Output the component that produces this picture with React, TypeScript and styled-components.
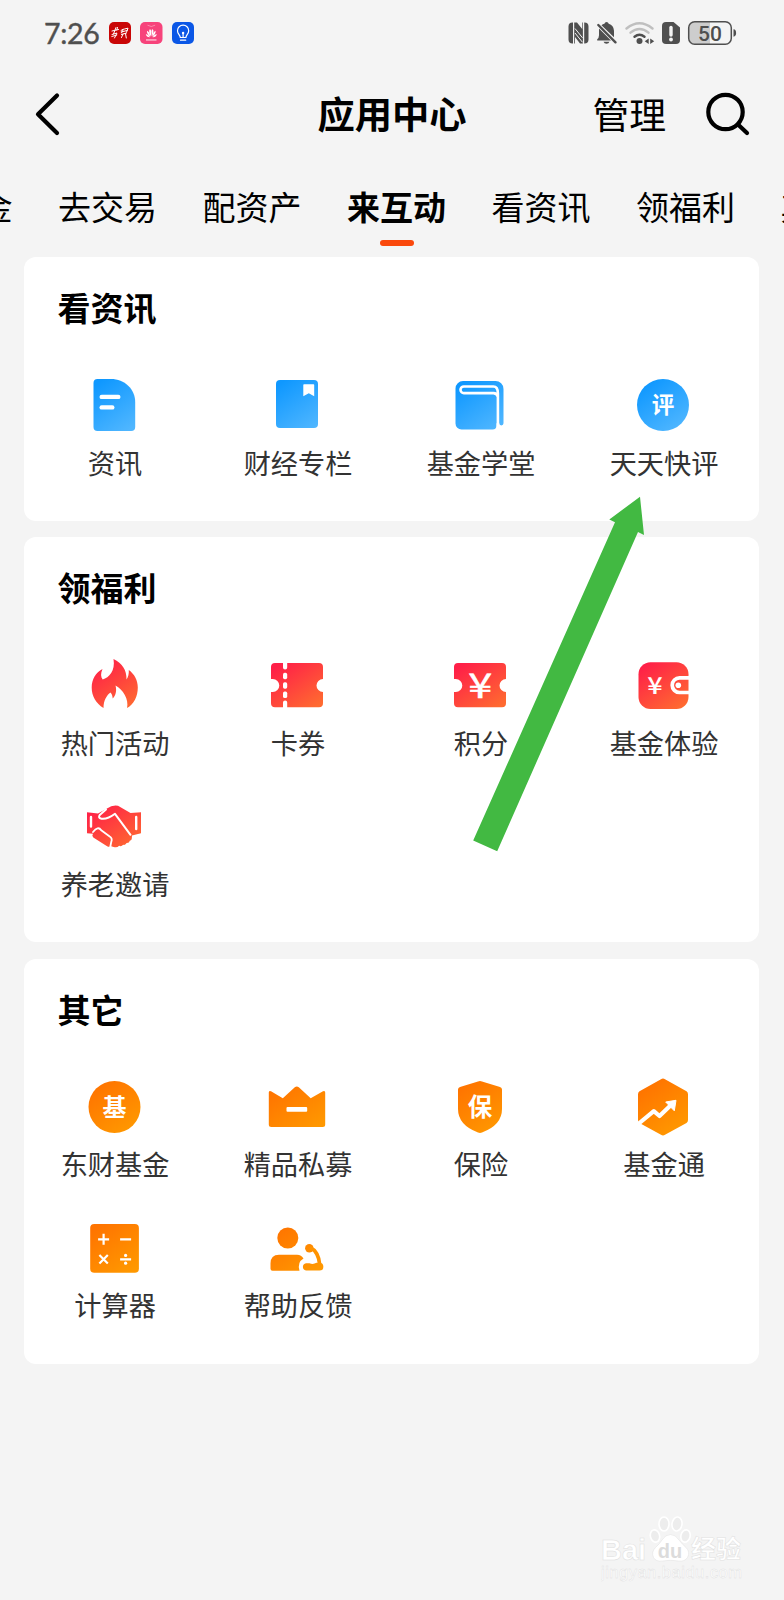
import React, { useState } from "react";
import styled, { createGlobalStyle } from "styled-components";

type Tone = "blue" | "red" | "orange";

interface AppItem {
  label: string;
  icon: React.ReactNode;
}

interface Section {
  title: string;
  items: AppItem[];
}

const CJK = `"Noto Sans CJK SC", "Noto Sans", sans-serif`;
const GREY = "#4f4f4f";

const GlobalStyle = createGlobalStyle`
  * {
    box-sizing: border-box;
  }

  body {
    margin: 0;
    background: #f4f4f4;
    font-family: ${CJK};
  }
`;

const Page = styled.div`
  position: relative;
  width: 784px;
  height: 1600px;
  overflow: hidden;
  background: #f4f4f4;
`;

const StatusBar = styled.div`
  display: flex;
  align-items: center;
  justify-content: space-between;
  height: 66px;
  padding: 0 46px 0 44px;
`;

const StatusGroup = styled.div<{ gap: number }>`
  display: flex;
  align-items: center;
  gap: ${(props) => props.gap}px;
`;

const Time = styled.span`
  width: 56px;
  font-family: Lato, sans-serif;
  font-size: 28.5px;
  line-height: 34px;
  color: ${GREY};
  letter-spacing: -0.3px;
  -webkit-text-stroke: 0.4px ${GREY};
`;

const Header = styled.header`
  display: grid;
  grid-template-columns: 1fr auto 1fr;
  align-items: center;
  height: 96px;
  padding: 0 34px;
`;

const HeaderSide = styled.div<{ end?: boolean }>`
  display: flex;
  align-items: center;
  justify-content: ${(props) => (props.end ? "flex-end" : "flex-start")};
  gap: 38px;
`;

const Title = styled.h1`
  margin: 0;
  padding-bottom: 3px;
  font-size: 37.3px;
  line-height: 50px;
  font-weight: 700;
  color: #000;
`;

const TextButton = styled.button`
  padding: 0 0 2px;
  border: 0;
  background: none;
  font-family: inherit;
  font-size: 36.8px;
  line-height: 50px;
  color: #000;
`;

const Tabs = styled.nav`
  display: flex;
  justify-content: flex-start;
  gap: 45.5px;
  height: 95px;
  margin-left: -86.4px;
  padding-top: 19px;
`;

const Tab = styled.button<{ active: boolean }>`
  display: flex;
  flex: none;
  flex-direction: column;
  align-items: center;
  width: 99px;
  padding: 0;
  border: 0;
  background: none;
  font-family: inherit;
  font-size: 33px;
  line-height: 50px;
  font-weight: ${(props) => (props.active ? 700 : 400)};
  color: #000;
  white-space: nowrap;

  &:last-child {
    align-items: flex-start;
  }

  &::after {
    content: "";
    width: 34px;
    height: 6px;
    margin-top: 9px;
    border-radius: 3px;
    background: ${(props) => (props.active ? "#fa480c" : "transparent")};
  }
`;

const CardList = styled.main`
  display: flex;
  flex-direction: column;
  gap: 16.4px;
  padding: 0 25px 0 24px;
`;

const Card = styled.section`
  padding-bottom: 5px;
  border-radius: 12px;
  background: #fff;
`;

const CardTitle = styled.h2`
  height: 104px;
  margin: 0;
  padding-left: 33.5px;
  font-size: 33px;
  line-height: 100px;
  font-weight: 700;
  color: #000;
`;

const Grid = styled.div`
  display: grid;
  grid-template-columns: repeat(4, 183px);
  grid-auto-rows: 141px;
  margin-left: -1.2px;
  padding-top: 14px;
`;

const Cell = styled.div`
  display: flex;
  flex-direction: column;
  align-items: center;
`;

const Label = styled.span`
  margin-top: 7.6px;
  padding-left: 1.5px;
  font-size: 27.2px;
  line-height: 38px;
  color: #333;
  white-space: nowrap;
`;

const Glyph = styled.text<{ weight?: number }>`
  font-family: ${CJK};
  font-weight: ${(props) => props.weight || 700};
  fill: #fff;
  text-anchor: middle;
`;

const Pointer = styled.svg`
  position: absolute;
  left: 460px;
  top: 490px;
  pointer-events: none;
`;

const Watermark = styled.svg`
  position: absolute;
  left: 601px;
  top: 1512px;
`;

const HiddenDefs = styled.svg`
  position: absolute;
`;

const TONES: Record<Tone, [string, string]> = {
  blue: ["#0f98ff", "#4fb6ff"],
  red: ["#ff1f48", "#ff6a30"],
  orange: ["#ff7400", "#ff9800"],
};

const ToneIcon: React.FC<{ tone: Tone; children: React.ReactNode }> = ({ tone, children }) => (
  <svg width='60' height='60' viewBox='0 0 60 60' fill={`url(#tone-${tone})`}>
    {children}
  </svg>
);

// gradients shared by all icons
const Gradients = () => (
  <HiddenDefs width='0' height='0'>
    <defs>
      {(Object.keys(TONES) as Tone[]).map((tone) => (
        <linearGradient key={tone} id={`tone-${tone}`} gradientUnits='userSpaceOnUse' x1='14' y1='8' x2='46' y2='54'>
          <stop offset='0' stopColor={TONES[tone][0]} />
          <stop offset='1' stopColor={TONES[tone][1]} />
        </linearGradient>
      ))}
    </defs>
  </HiddenDefs>
);

const NewsIcon = () => (
  <ToneIcon tone='blue'>
    <path d='M13.500 4H27C40.500 4 51.200 14 51.200 27V52a4 4 0 0 1-4 4H13.500a4 4 0 0 1-4-4V8a4 4 0 0 1 4-4z' />
    <rect x='15.500' y='19.700' width='21' height='4.400' rx='2.200' fill='#fff' />
    <rect x='15.500' y='30.200' width='15' height='4.400' rx='2.200' fill='#fff' />
  </ToneIcon>
);

const ColumnIcon = () => (
  <ToneIcon tone='blue'>
    <rect x='9' y='5' width='42' height='48' rx='4' />
    <path d='M37 9.300h9.500a.7.7 0 0 1 .7.7v11.300l-5.400-3-5.500 3V10a.7.7 0 0 1 .7-.7z' fill='#fff' />
  </ToneIcon>
);

const SchoolIcon = () => (
  <ToneIcon tone='blue'>
    <path d='M13 6h32.500a8 8 0 0 1 8 8v34.300a2.100 2.100 0 0 1-4.300 0H46.500v2.200a4 4 0 0 1-4 4H11.500a6 6 0 0 1-6-6V13.500A7.500 7.500 0 0 1 13 6z' />
    <path
      d='M47.900 55V18.500q0-7-4.500-7H13.800a3.300 3.300 0 0 0 0 6.600h29.600q3.500 0 4.400 3.500'
      fill='none'
      stroke='#fff'
      strokeWidth='2.600'
    />
  </ToneIcon>
);

const ReviewIcon = () => (
  <ToneIcon tone='blue'>
    <circle cx='30' cy='30' r='26' />
    <Glyph x='30' y='38.300' fontSize='22.500'>
      评
    </Glyph>
  </ToneIcon>
);

const FireIcon = () => (
  <ToneIcon tone='red'>
    <path d='M29.500 4C38.500 8.500 42.800 15 42.500 24.500c1.800-2.500 2.500-5.500 2.300-9.500 5.500 4 9 10.200 9 17.500 0 9-4 16.500-10.700 20.600C45 43.500 39 35 31.500 30.500c1.300 5 .6 9.500-2.800 13-.2-2.700-.8-4.500-2.200-6-3.500 2.500-7 7.500-7 15.500C12 48.500 7.700 41 7.700 32.500c0-8.200 4-14.700 10.800-18.500-2 4.500-1.800 8 .2 10.500C25 22.500 31.500 16 29.500 4z' />
  </ToneIcon>
);

const CouponShape = () => (
  <path d='M8 8h44a4 4 0 0 1 4 4V24a6.500 6.500 0 0 0 0 13V48.300a4 4 0 0 1-4 4H8a4 4 0 0 1-4-4V37h1.800a6.500 6.500 0 0 0 0-13H4V12a4 4 0 0 1 4-4z' />
);

const CouponIcon = () => (
  <ToneIcon tone='red'>
    <CouponShape />
    <g fill='#fff'>
      <path d='M16 6.500h4.200v6a2.100 2.100 0 0 1-4.200 0zM16 54h4.200V47.500a2.100 2.100 0 0 0-4.200 0z' />
      <rect x='16' y='17.700' width='4.200' height='6.600' rx='1.700' />
      <rect x='16' y='27.200' width='4.200' height='6.600' rx='1.700' />
      <rect x='16' y='36.500' width='4.200' height='6.600' rx='1.700' />
    </g>
  </ToneIcon>
);

const PointsIcon = () => (
  <ToneIcon tone='red'>
    <CouponShape />
    <Glyph fontSize='34.500' weight={400} transform='translate(30.200 43) scale(1.250 1)' stroke='#fff' strokeWidth='.5'>
      ¥
    </Glyph>
  </ToneIcon>
);

const WalletIcon = () => (
  <ToneIcon tone='red'>
    <rect x='5.500' y='7.300' width='50' height='46.700' rx='12' />
    <path d='M57 22.900H46.500a7.300 7.300 0 0 0 0 14.600H57' fill='none' stroke='#fff' strokeWidth='3.700' />
    <circle cx='45.300' cy='30.200' r='2.800' fill='#fff' />
    <Glyph fontSize='23.500' weight={500} transform='translate(22 38.700) scale(1.150 1)'>
      ¥
    </Glyph>
  </ToneIcon>
);

const HandshakeIcon = () => (
  <ToneIcon tone='red'>
    <path d='M3 16.300l11 1.200 9-5Q28.500 8.500 34 9.700L46.500 17l10.500-.7v21L48 39.500 47.800 42.500q0 2-2 2.200-.5 2.600-3.200 2.400-1 2.300-3.500 1.700-1.500 2-4 1-2 2.300-5.500 1.200l-2.500-.8q-2 1-4 0L9.300 41.500q-1.800-1.700-.3-3.800L3 37.300z' />
    <g fill='none' stroke='#fff' strokeLinecap='round' strokeLinejoin='round'>
      <path d='M7 21v9.500M52.200 21v12' strokeWidth='2.400' />
      <path d='M22 13.500l-6 5.200q-2.500 3.500 1.500 4 6 .8 13.500-4.900l15.500 21' strokeWidth='2' />
      <path d='M9 36q5-6.500 8.200-1.800l8.500 6.300q3 1.800 1.600 5.300l-1.200 6' strokeWidth='1.800' />
    </g>
  </ToneIcon>
);

const FundIcon = () => (
  <ToneIcon tone='orange'>
    <circle cx='30.500' cy='30' r='26' />
    <Glyph x='30.500' y='39' fontSize='24'>
      基
    </Glyph>
  </ToneIcon>
);

const CrownIcon = () => (
  <ToneIcon tone='orange'>
    <path d='M4 14.300l11.800 7 12-11q2-1.800 4 0l11.900 11L56 14.200q2.200-1 2.200 1.300V47.500a2.500 2.500 0 0 1-2.500 2.500H4.300a2.500 2.500 0 0 1-2.500-2.500V15.500q0-2.300 2.200-1.200z' />
    <rect x='19.500' y='30' width='20.700' height='4.700' rx='1' fill='#fff' />
  </ToneIcon>
);

const ShieldIcon = () => (
  <ToneIcon tone='orange'>
    <path d='M28 4.500q2-.8 4 0l18 5.600q2 .6 2 2.400V32q0 16-20 23.500-2 .8-4 0-20-7.500-20-23.500V12.500q0-1.800 2-2.400z' />
    <Glyph x='30' y='39' fontSize='24.500'>
      保
    </Glyph>
  </ToneIcon>
);

const TrendIcon = () => (
  <ToneIcon tone='orange'>
    <path d='M28 2.200q2-1.200 4 0l21.500 12q1.500 1 1.500 3V43q0 2-1.500 3L32 57.800q-2 1.200-4 0L6.500 46q-1.500-1-1.500-3V17.200q0-2 1.500-3z' />
    <path d='M4 48L20.800 34.200l5.700 4.800L38 28' fill='none' stroke='#fff' strokeWidth='4.200' strokeLinejoin='round' />
    <path d='M43 23.300L32.700 25l8.600 8.800z' fill='#fff' stroke='#fff' strokeWidth='1' strokeLinejoin='round' />
  </ToneIcon>
);

const CalculatorIcon = () => (
  <ToneIcon tone='orange'>
    <rect x='6.200' y='6' width='48.700' height='48.700' rx='4' />
    <g fill='none' stroke='#fff' strokeWidth='2.200'>
      <path d='M14.100 21.300h11M19.600 15.800v11M36.100 21.300h11M15.400 37l8.400 8.600M23.800 37l-8.400 8.600M36.100 41.300h11' />
    </g>
    <circle cx='41.600' cy='37.400' r='1.600' fill='#fff' />
    <circle cx='41.600' cy='45.200' r='1.600' fill='#fff' />
  </ToneIcon>
);

const FeedbackIcon = () => (
  <ToneIcon tone='orange'>
    <circle cx='20.800' cy='20' r='10.500' />
    <path d='M12 36.700h18q4.500 0 6.500 3.800-6.500 3.800-4 12.200H5.500a2 2 0 0 1-2-2V45.500q0-8.800 8.500-8.800z' />
    <circle cx='42.300' cy='30.300' r='4.200' />
    <path d='M43 29.500q8.500 4 9.700 17' fill='none' stroke='#ff9300' strokeWidth='3.600' />
    <path d='M39 45.200h3.500q3.500 1.600 7-.4h3a3.700 3.700 0 0 1 0 7.700H39a3.700 3.700 0 0 1 0-7.300z' />
  </ToneIcon>
);

const sections: Section[] = [
  {
    title: "看资讯",
    items: [
      { label: "资讯", icon: <NewsIcon /> },
      { label: "财经专栏", icon: <ColumnIcon /> },
      { label: "基金学堂", icon: <SchoolIcon /> },
      { label: "天天快评", icon: <ReviewIcon /> },
    ],
  },
  {
    title: "领福利",
    items: [
      { label: "热门活动", icon: <FireIcon /> },
      { label: "卡券", icon: <CouponIcon /> },
      { label: "积分", icon: <PointsIcon /> },
      { label: "基金体验", icon: <WalletIcon /> },
      { label: "养老邀请", icon: <HandshakeIcon /> },
    ],
  },
  {
    title: "其它",
    items: [
      { label: "东财基金", icon: <FundIcon /> },
      { label: "精品私募", icon: <CrownIcon /> },
      { label: "保险", icon: <ShieldIcon /> },
      { label: "基金通", icon: <TrendIcon /> },
      { label: "计算器", icon: <CalculatorIcon /> },
      { label: "帮助反馈", icon: <FeedbackIcon /> },
    ],
  },
];

const tabs = ["查基金", "去交易", "配资产", "来互动", "看资讯", "领福利", "其它"];

const NotificationIcons = () => (
  <>
    <svg width='22' height='22' viewBox='0 0 22 22'>
      <rect width='22' height='22' rx='5' fill='#c90606' />
      <g fill='none' stroke='#fff' strokeWidth='1' strokeLinecap='round'>
        <path d='M3 9l6.500-1.500M7 5.500L4.500 12M3 12.500l5-1.500-2.500 5M2.800 14.500l5-1.500M8.500 5.500L7.800 8' />
        <path d='M12 8.500l2.500-1.500-2 4M15.500 7l3.500-.8-1.500 4M12.500 12.500l5-1.500M14 12l-1.500 3.500M16.500 11.500l.8 4.500M12.200 10l6-1.500' />
      </g>
    </svg>
    <svg width='22.500' height='22' viewBox='0 0 22.500 22'>
      <rect width='22.500' height='22' rx='5' fill='#f7437b' />
      <g fill='#fff'>
        <path d='M10.900 14.500Q8 9.500 9.800 7.200q1.300 0 1.300 2zM11.700 14.500q2.900-5 1.100-7.300-1.300 0-1.300 2z' />
        <path d='M10.300 14.800Q6.500 12 7 8.800q2 .5 2.800 3.500zM12.300 14.800q3.800-2.800 3.300-6-2 .5-2.800 3.500zM10 15.200q-3.500.2-4.200-3.200 2.500.5 4.200 3.200zM12.600 15.200q3.500.2 4.200-3.200-2.500.5-4.200 3.200z' />
        <rect x='6' y='17.300' width='10.500' height='1.300' opacity='.7' />
      </g>
      <path d='M7.500 3.200q3.800 2.600 7.600 0' fill='none' stroke='#fff' strokeWidth='.6' opacity='.6' />
    </svg>
    <svg width='22' height='22' viewBox='0 0 22 22'>
      <rect width='22' height='22' rx='5' fill='#0b57e6' />
      <g fill='none' stroke='#fff' strokeWidth='1.200' strokeLinecap='round'>
        <path d='M8.300 15.500c0-2.500-2.800-3.500-2.800-6.800a5.600 5.600 0 0 1 11.200 0c0 3.300-2.800 4.300-2.800 6.800zM8.500 18.200h5.200M11.100 15v-3.500' />
      </g>
      <circle cx='11.100' cy='11' r='1.200' fill='#fff' />
    </svg>
  </>
);

const SystemIcons = () => (
  <svg width='170' height='26' viewBox='0 0 170 26' fill={GREY}>
    {/* nfc */}
    <path d='M4.500 2.500H5v21h-.5a4 4 0 0 1-4-4v-13a4 4 0 0 1 4-4zM16.200 2.500h.3a4 4 0 0 1 4 4v13a4 4 0 0 1-4 4h-.3z' />
    <path d='M6.200 2.500H9l5.200 6.600V2.500h.7v21H12L7 17v6.500h-.8z' />
    <path d='M7 8.500l7.500 9.300M7 13l7.500 9.300' stroke='#f4f4f4' strokeWidth='1' />
    {/* muted bell */}
    <path d='M38.500 2q1.800 0 2.200 1.700 5 1.500 5.300 7v6.600L33.500 5.200q1.200-1.100 2.900-1.500Q36.900 2 38.500 2zM31 8.500L43 20.500H29.200v-1.300q1.800-1.500 1.800-4zM35.500 21.800h6q-.8 2-3 2t-3-2z' />
    <path d='M30.300 5l17.200 17.300' stroke={GREY} strokeWidth='2.400' strokeLinecap='round' />
    {/* wifi */}
    <g fill='none' strokeWidth='2.400' strokeLinecap='round'>
      <path d='M58.500 8.500q13-10.500 26 0' stroke='#bfbfbf' />
      <path d='M62.500 12.700q9-7.500 18 0' stroke='#bfbfbf' />
      <path d='M66.500 16.800q5-4 10 0' stroke={GREY} />
    </g>
    <circle cx='71.500' cy='21' r='3' />
    <path d='M80.700 18.500v5.500l-4-2.800zM82.200 18.500v5.500l4-2.800z' />
    {/* sim alert */}
    <path d='M98 2h7.500l6.500 5.500V20a4 4 0 0 1-4 4H98a4 4 0 0 1-4-4V6a4 4 0 0 1 4-4z' />
    <path d='M103 7.500v7.500' stroke='#f4f4f4' strokeWidth='3.400' strokeLinecap='round' />
    <circle cx='103' cy='19.500' r='1.900' fill='#f4f4f4' />
    {/* battery */}
    <path d='M127 2h15v22h-15a6 6 0 0 1-6-6V8a6 6 0 0 1 6-6z' fill='#cdcdcd' />
    <rect x='120.700' y='1.700' width='42.600' height='22.600' rx='6' fill='none' stroke={GREY} strokeWidth='1.500' />
    <path d='M165.500 9.300q2.600.3 2.600 3.700t-2.600 3.700z' />
    <text x='142' y='20.500' fontFamily='Roboto' fontWeight='500' fontSize='21' textAnchor='middle'>
      50
    </text>
  </svg>
);

export const App: React.FC = () => {
  const [activeTab, setActiveTab] = useState("来互动");

  return (
    <Page>
      <GlobalStyle />
      <Gradients />

      <StatusBar>
        <StatusGroup gap={9}>
          <Time>7:26</Time>
          <NotificationIcons />
        </StatusGroup>
        <StatusGroup gap={0}>
          <SystemIcons />
        </StatusGroup>
      </StatusBar>

      <Header>
        <HeaderSide>
          <svg width='28' height='46' viewBox='0 0 28 46' fill='none' stroke='#000' strokeWidth='4.200'>
            <path d='M23 4.500L4 23.300l19 18.700' strokeLinecap='round' strokeLinejoin='round' />
          </svg>
        </HeaderSide>
        <Title>应用中心</Title>
        <HeaderSide end>
          <TextButton>管理</TextButton>
          <svg width='46' height='46' viewBox='0 0 46 46' fill='none' stroke='#000' strokeWidth='4.200'>
            <circle cx='21.500' cy='21' r='17.200' />
            <path d='M34 33.500l9 8.500' strokeLinecap='round' />
          </svg>
        </HeaderSide>
      </Header>

      <Tabs>
        {tabs.map((tab) => (
          <Tab key={tab} active={tab === activeTab} onClick={() => setActiveTab(tab)}>
            {tab}
          </Tab>
        ))}
      </Tabs>

      <CardList>
        {sections.map(({ title, items }) => (
          <Card key={title}>
            <CardTitle>{title}</CardTitle>
            <Grid>
              {items.map(({ label, icon }) => (
                <Cell key={label}>
                  {icon}
                  <Label>{label}</Label>
                </Cell>
              ))}
            </Grid>
          </Card>
        ))}
      </CardList>

      <Pointer width='200' height='370' viewBox='460 490 200 370'>
        <path d='M640 496.700L609.300 519.500l5.700 2.800L473.200 840.500l24 10.700L638 532l6 3z' fill='#42b942' />
      </Pointer>

      <Watermark width='150' height='72' viewBox='0 0 150 72' fill='#fff' stroke='#dedede' strokeWidth='.5'>
        <text x='0' y='48' fontFamily='Liberation Sans' fontWeight='700' fontSize='29'>
          Bai
        </text>
        <g fill='#ededed' stroke='#fff' strokeWidth='1.600'>
          <ellipse cx='54' cy='24' rx='4.600' ry='6.200' transform='rotate(-15 54 24)' />
          <ellipse cx='63' cy='12' rx='5' ry='7' />
          <ellipse cx='76' cy='12' rx='5' ry='7' transform='rotate(8 76 12)' />
          <ellipse cx='84.500' cy='24' rx='4.600' ry='6.200' transform='rotate(15 84.500 24)' />
        </g>
        <path d='M69.500 22.500q5 0 8.500 5.500 3 4 7 7.500 4.500 4.500 1.500 10-3 4.500-9 3.500-8-1.500-16 0-6.500 1-9-3.500-2.500-5.500 2-10 4-3.500 6.500-7.500 3.500-5.500 8.500-5.500z' />
        <text x='69' y='46' fontFamily='Liberation Sans' fontWeight='700' fontSize='20' textAnchor='middle' fill='#dcdcdc' stroke='none'>
          du
        </text>
        <text x='90' y='46' fontFamily='Noto Sans CJK SC' fontWeight='700' fontSize='25'>
          经验
        </text>
        <text x='0' y='66' fontFamily='Liberation Sans' fontSize='16.500' textLength='141' strokeWidth='.4'>
          jingyan.baidu.com
        </text>
      </Watermark>
    </Page>
  );
};

export default App;
